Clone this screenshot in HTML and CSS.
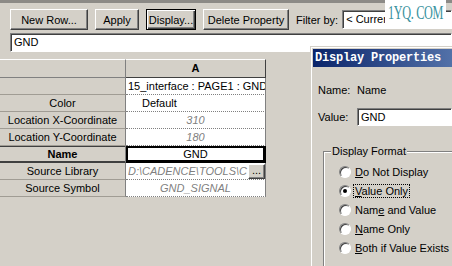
FILE: index.html
```html
<!DOCTYPE html>
<html lang="en">
<head>
    <meta charset="UTF-8">
    <title>Property Editor</title>
    <link rel="stylesheet" href="styles.css">
</head>
<body>

    <div class="topline"></div>

    <div class="toolbar">
        <button class="btn btn-new">New Row...</button>
        <button class="btn btn-apply">Apply</button>
        <button class="btn btn-display">Display...</button>
        <button class="btn btn-delete">Delete Property</button>
        <span class="filter-label">Filter by:</span>
        <div class="filter-box">&lt; Curren</div>
    </div>

    <div class="name-bar">
        <div class="name-field">GND</div>
    </div>

    <div class="sheet">
        <div class="rh corner"></div>
        <div class="ch">A</div>

        <div class="rh"></div>
        <div class="cell left">15_interface : PAGE1 : GND</div>

        <div class="rh">Color</div>
        <div class="cell left indent">Default</div>

        <div class="rh">Location X-Coordinate</div>
        <div class="cell muted">310</div>

        <div class="rh">Location Y-Coordinate</div>
        <div class="cell muted">180</div>

        <div class="rh rh-active">Name</div>
        <div class="cell cell-active">GND</div>

        <div class="rh">Source Library</div>
        <div class="cell muted left browse">
            <span class="clip">D:\CADENCE\TOOLS\C</span>
            <span class="dots-btn">...</span>
        </div>

        <div class="rh">Source Symbol</div>
        <div class="cell muted">GND_SIGNAL</div>
    </div>

    <div class="dialog">
        <div class="title">Display Properties</div>
        <div class="dlg-body">
            <div class="dlg-row">
                <span class="dlg-label">Name:</span>
                <span>Name</span>
            </div>
            <div class="dlg-row value-row">
                <span class="dlg-label">Value:</span>
                <div class="value-field">GND</div>
            </div>
            <fieldset class="format">
                <legend>Display Format</legend>
                <div class="radio"><span class="knob"></span><span><u>D</u>o Not Display</span></div>
                <div class="radio"><span class="knob on"></span><span class="focus"><u>V</u>alue Only</span></div>
                <div class="radio"><span class="knob"></span><span>Nam<u>e</u> and Value</span></div>
                <div class="radio"><span class="knob"></span><span><u>N</u>ame Only</span></div>
                <div class="radio"><span class="knob"></span><span><u>B</u>oth if Value Exists</span></div>
            </fieldset>
        </div>
    </div>

    <div class="watermark"><span>1YQ. COM</span></div>

</body>
</html>
```

FILE: styles.css
```css
body {
    margin: 0;
    padding: 0;
    background-color: #D4D0C8;
    font-family: 'Liberation Sans', Arial, sans-serif;
    font-size: 11px;
    color: #000;
    overflow: hidden;
    height: 266px;
}

.topline {
    height: 3px;
    background-color: #8C8A86;
}

/* barra de botoes */
.toolbar {
    display: flex;
    align-items: center;
    gap: 7px;
    height: 21px;
    margin-top: 6px;
    padding-left: 10px;
}

.btn {
    height: 21px;
    padding: 0;
    font-family: inherit;
    font-size: 11px;
    color: #000;
    background-color: #D4D0C8;
    border: 1px solid;
    border-color: #FFFFFF #404040 #404040 #FFFFFF;
    box-shadow: inset -1px -1px #808080;
}

.btn-new { width: 78px; }
.btn-apply { width: 44px; }
.btn-delete { width: 86px; }

.btn-display {
    width: 50px;
    border: 1px solid #000;
    box-shadow: inset 1px 1px #FFFFFF, inset -1px -1px #404040, inset -2px -2px #808080;
}

.filter-label {
    margin-right: -3px;
}

.filter-box {
    flex: 1;
    height: 19px;
    line-height: 17px;
    padding-left: 3px;
    box-sizing: border-box;
    background-color: #FFF;
    border: 1px solid;
    border-color: #808080 #FFFFFF #FFFFFF #808080;
    box-shadow: inset 1px 1px #404040;
    white-space: nowrap;
    overflow: hidden;
}

.name-bar {
    display: flex;
    margin-top: 3px;
    padding-left: 10px;
}

.name-field {
    flex: 1;
    height: 19px;
    line-height: 17px;
    padding-left: 3px;
    box-sizing: border-box;
    background-color: #FFF;
    border: 1px solid;
    border-color: #808080 #FFFFFF #FFFFFF #808080;
    box-shadow: inset 1px 1px #404040;
}

/* planilha */
.sheet {
    display: grid;
    grid-template-columns: 126px 140px;
    grid-auto-rows: 17px;
    grid-template-rows: 19px;
    margin-top: 7px;
    width: 266px;
}

.rh {
    box-sizing: border-box;
    background-color: #D4D0C8;
    border-bottom: 1px solid #A09C94;
    border-right: 1px solid #808080;
    text-align: center;
    line-height: 16px;
    white-space: nowrap;
}

.corner {
    border-top: 1px solid #FFF;
    border-bottom-color: #808080;
}

.ch {
    box-sizing: border-box;
    background-color: #D4D0C8;
    border-top: 1px solid #FFF;
    border-bottom: 1px solid #404040;
    border-right: 1px solid #404040;
    text-align: center;
    font-weight: bold;
    line-height: 17px;
}

.cell {
    box-sizing: border-box;
    background-color: #FFF;
    border-bottom: 1px dotted #808080;
    border-right: 1px solid #808080;
    text-align: center;
    line-height: 16px;
    white-space: nowrap;
    overflow: hidden;
}

.cell.left {
    text-align: left;
    padding-left: 2px;
}

.cell.indent {
    padding-left: 16px;
}

.muted {
    color: #808080;
    font-style: italic;
}

.rh-active {
    font-weight: bold;
    box-shadow: inset 0 1px #404040, inset 0 -1px #404040;
    border-bottom-color: #404040;
}

.cell-active {
    box-shadow: inset 0 0 0 2px #000;
    border-bottom: 1px solid #000;
    border-right: 1px solid #000;
}

.browse {
    display: flex;
    align-items: center;
}

.clip {
    flex: 1;
    overflow: hidden;
    min-width: 0;
}

.dots-btn {
    width: 17px;
    height: 15px;
    box-sizing: border-box;
    line-height: 11px;
    text-align: center;
    font-style: normal;
    color: #000;
    background-color: #D4D0C8;
    border: 1px solid;
    border-color: #FFFFFF #404040 #404040 #FFFFFF;
    box-shadow: inset -1px -1px #808080;
}

/* janela flutuante */
.dialog {
    position: absolute;
    left: 310px;
    top: 46px;
    right: 0;
    bottom: 0;
    overflow: hidden;
    box-sizing: border-box;
    background-color: #D4D0C8;
    border-left: 1px solid #D4D0C8;
    border-top: 1px solid #D4D0C8;
    box-shadow: inset 1px 1px #FFFFFF;
    padding: 2px 0 0 2px;
}

.title {
    height: 18px;
    line-height: 18px;
    padding-left: 2px;
    color: #FFF;
    font-family: 'Liberation Mono', 'Courier New', monospace;
    font-weight: bold;
    font-size: 12px;
    letter-spacing: -0.2px;
    white-space: nowrap;
    overflow: hidden;
    background: linear-gradient(to right, #0A246A, #A6CAF0 300px);
}

.dlg-body {
    padding: 14px 0 0 5px;
}

.dlg-row {
    display: flex;
    align-items: center;
    height: 18px;
}

.dlg-label {
    width: 39px;
}

.value-row {
    margin-top: 9px;
}

.value-field {
    flex: 1;
    height: 18px;
    line-height: 16px;
    padding-left: 3px;
    box-sizing: border-box;
    background-color: #FFF;
    border: 1px solid;
    border-color: #808080 #FFFFFF #FFFFFF #808080;
    box-shadow: inset 1px 1px #404040;
}

.format {
    margin: 19px 0 0 5px;
    padding: 4px 0 0 15px;
    height: 140px;
    border: 1px solid #808080;
    border-right: none;
    box-shadow: inset 1px 1px #FFF, 1px 1px #FFF;
}

.format legend {
    padding: 0 1px;
    margin-left: -8px;
    line-height: 13px;
    background-color: #D4D0C8;
}

.radio {
    display: flex;
    align-items: center;
    gap: 4px;
    height: 19px;
    white-space: nowrap;
}

.knob {
    position: relative;
    width: 12px;
    height: 12px;
    flex: none;
    box-sizing: border-box;
    border-radius: 50%;
    background-color: #FFF;
    border: 1px solid;
    border-color: #808080 #FFFFFF #FFFFFF #808080;
    box-shadow: inset 1px 1px #404040;
}

.knob.on::after {
    content: "";
    position: absolute;
    left: 3px;
    top: 3px;
    width: 4px;
    height: 4px;
    border-radius: 50%;
    background-color: #000;
}

.focus {
    outline: 1px dotted #000;
    outline-offset: 0;
    padding: 0 1px;
    margin-left: -1px;
}

.watermark {
    position: absolute;
    left: 385px;
    top: 0;
    width: 61px;
    height: 28px;
    display: flex;
    justify-content: center;
    align-items: center;
    background-color: #FFF;
    color: #3A929E;
    font-family: 'Liberation Serif', 'Times New Roman', serif;
    font-size: 18px;
    white-space: nowrap;
}

.watermark span {
    display: inline-block;
    letter-spacing: -0.5px;
    margin-top: -2px;
    transform: scaleX(0.68);
}
```
